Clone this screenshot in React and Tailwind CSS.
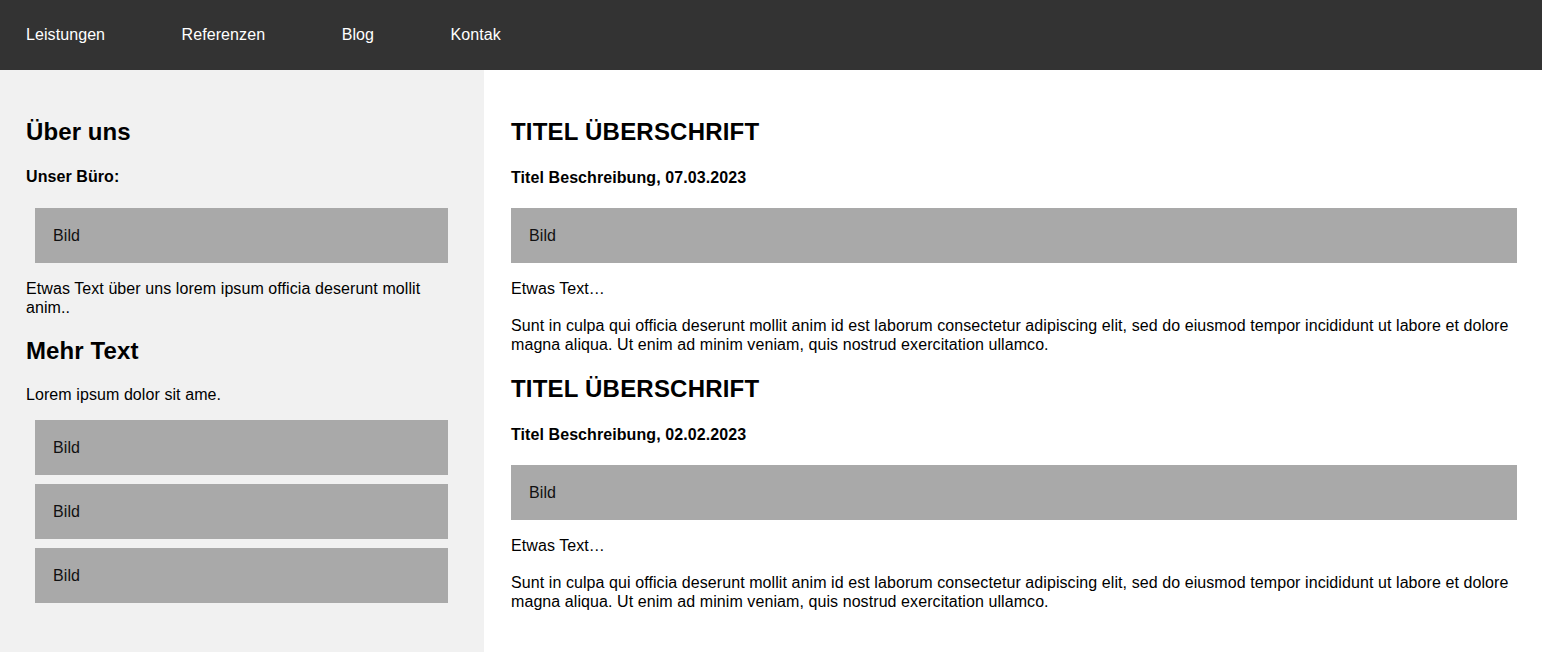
import React from 'react';

const navLinks = ['Leistungen', 'Referenzen', 'Blog', 'Kontak'];

const Bild = ({ className = '' }) => (
    <div className={`bg-[#a9a9a9] pl-[18px] py-[18px] text-[16px] leading-[19px] text-[#111] ${className}`}>
        Bild
    </div>
);

const Post = ({ date, first }) => (
    <article className={first ? 'mt-[48px]' : 'mt-[21px]'}>
        <h2 className="text-[24px] leading-[28px] font-bold uppercase tracking-[0.2px]">Titel Überschrift</h2>
        <h4 className="mt-[22px] text-[16px] leading-[19px] font-bold">Titel Beschreibung, {date}</h4>
        <Bild className="mt-[21px]" />
        <p className="mt-[16px]">Etwas Text…</p>
        <p className="mt-[18px]">
            Sunt in culpa qui officia deserunt mollit anim id est laborum consectetur adipiscing elit, sed do eiusmod tempor incididunt ut labore et dolore magna aliqua. Ut enim ad minim veniam, quis nostrud exercitation ullamco.
        </p>
    </article>
);

const App = () => {
    return (
        <div className="min-h-screen flex flex-col bg-white text-black text-[16px] leading-[19px] tracking-[0.08px] font-['Liberation_Sans',Arial,sans-serif]">
            {/* Top navigation */}
            <nav className="h-[70px] shrink-0 bg-[#333333] flex items-center pl-[26px] pb-[2px] gap-[76.5px]">
                {navLinks.map((link) => (
                    <a key={link} href="#" className="text-white text-[16px] leading-[19px]">
                        {link}
                    </a>
                ))}
            </nav>

            <div className="flex flex-1">
                {/* Sidebar */}
                <aside className="w-[484px] shrink-0 bg-[#f1f1f1] px-[26px] pb-[40px]">
                    <h2 className="mt-[48px] text-[24px] leading-[28px] font-bold tracking-[0.1px]">Über uns</h2>
                    <h4 className="mt-[21px] font-bold">Unser Büro:</h4>
                    <Bild className="mt-[22px] ml-[9px] mr-[10px]" />
                    <p className="mt-[16px]">Etwas Text über uns lorem ipsum officia deserunt mollit anim..</p>

                    <h2 className="mt-[20px] text-[24px] leading-[28px] font-bold tracking-[0.1px]">Mehr Text</h2>
                    <p className="mt-[20px]">Lorem ipsum dolor sit ame.</p>
                    <div className="mt-[16px] ml-[9px] mr-[10px] flex flex-col gap-[9px]">
                        <Bild />
                        <Bild />
                        <Bild />
                    </div>
                </aside>

                {/* Main content */}
                <main className="flex-1 pl-[27px] pr-[25px] pb-[40px]">
                    <Post date="07.03.2023" first />
                    <Post date="02.02.2023" />
                </main>
            </div>
        </div>
    );
};

export default App;
